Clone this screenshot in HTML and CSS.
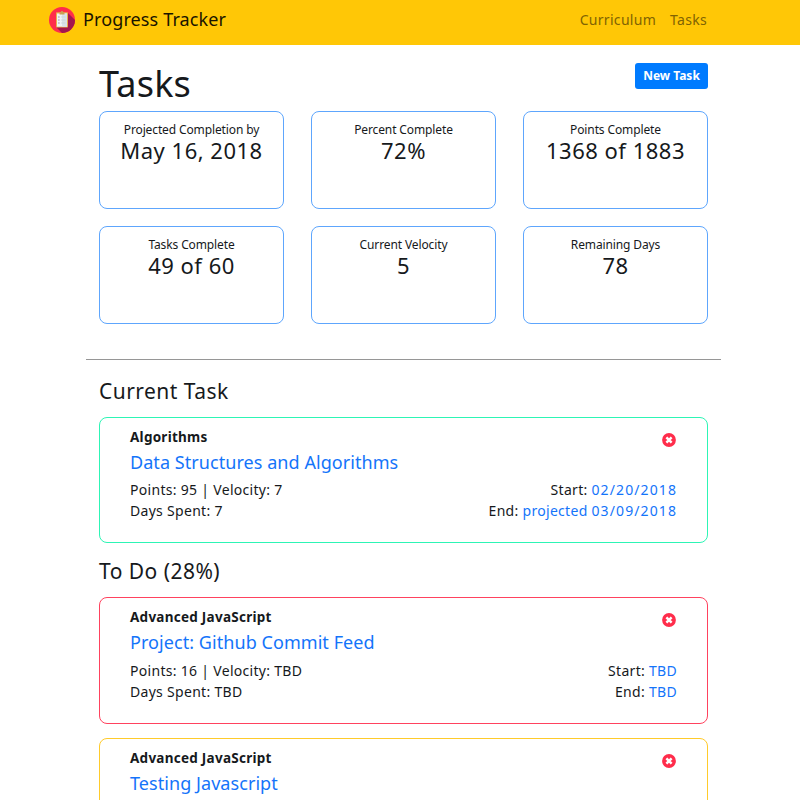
FILE: index.html
```html
<!DOCTYPE html>
<html lang="en">
<head>
<meta charset="utf-8">
<title>Progress Tracker</title>
<link rel="stylesheet" href="styles.css">
</head>
<body>
<svg width="0" height="0" class="sprite" aria-hidden="true">
  <symbol id="remove" viewBox="0 0 14 14">
    <circle cx="7" cy="7" r="6.9" fill="#ff2d4b"/>
    <path d="M4.4 4.4l5.2 5.2M9.6 4.4L4.4 9.6" stroke="#fff" stroke-width="2.5"/>
  </symbol>
</svg>
<header class="navbar">
  <a class="brand">
    <svg class="logo" viewBox="0 0 26 26">
      <clipPath id="disc"><circle cx="13" cy="13" r="13"/></clipPath>
      <g clip-path="url(#disc)">
        <rect width="26" height="26" fill="#ff2d4b"/>
        <path d="M19 6l9 9v13H15L7.5 20.5z" fill="#a3174f"/>
      </g>
      <rect x="7" y="5.3" width="12" height="15.2" rx=".8" fill="#e8b04a"/>
      <rect x="8" y="6.5" width="10" height="13.2" fill="#eef3f6"/>
      <path d="M13 6.5h5v13.2h-5z" fill="#d9e3e8"/>
      <path d="M10.5 5.4h1.2a1.3 1.3 0 0 1 2.6 0h1.2v2h-5z" fill="#c9a052"/>
      <path d="M9 10h1.7M9 13h1.7M9 16h1.7" stroke="#a58fb0" stroke-width="1.2"/>
      <path d="M12 10h4.5M12 13h4.5M12 16h4.5" stroke="#c5d0d8" stroke-width=".7"/>
    </svg>
    <span class="brand-name">Progress Tracker</span>
  </a>
  <nav class="nav"><a>Curriculum</a><a>Tasks</a></nav>
</header>
<main class="container">
  <div class="page-head"><h1>Tasks</h1><button class="btn">New Task</button></div>
  <section class="stats">
    <div class="stat"><p>Projected Completion by</p><h3>May 16, 2018</h3></div>
    <div class="stat"><p>Percent Complete</p><h3>72%</h3></div>
    <div class="stat"><p>Points Complete</p><h3>1368 of 1883</h3></div>
    <div class="stat"><p>Tasks Complete</p><h3>49 of 60</h3></div>
    <div class="stat"><p>Current Velocity</p><h3>5</h3></div>
    <div class="stat"><p>Remaining Days</p><h3>78</h3></div>
  </section>
  <hr>
  <h2>Current Task</h2>
  <article class="task current">
    <div class="row"><strong>Algorithms</strong><svg class="remove"><use href="#remove"/></svg></div>
    <h4>Data Structures and Algorithms</h4>
    <div class="row line"><span>Points: 95 | Velocity: 7</span><span>Start: <a class="date">02/20/2018</a></span></div>
    <div class="row line"><span>Days Spent: 7</span><span>End: <a>projected <span class="date">03/09/2018</span></a></span></div>
  </article>
  <h2>To Do (28%)</h2>
  <article class="task todo">
    <div class="row"><strong>Advanced JavaScript</strong><svg class="remove"><use href="#remove"/></svg></div>
    <h4>Project: Github Commit Feed</h4>
    <div class="row line"><span>Points: 16 | Velocity: TBD</span><span>Start: <a>TBD</a></span></div>
    <div class="row line"><span>Days Spent: TBD</span><span>End: <a>TBD</a></span></div>
  </article>
  <article class="task pending">
    <div class="row"><strong>Advanced JavaScript</strong><svg class="remove"><use href="#remove"/></svg></div>
    <h4>Testing Javascript</h4>
  </article>
</main>
</body>
</html>
```
FILE: styles.css
```css
* { box-sizing: border-box; }
html, body { margin: 0; height: 800px; overflow: hidden; }
body { background: #fff; color: #16191c; font: 14px/21px "Noto Sans", "Open Sans", sans-serif; }
h1, h2, h3, h4, p { margin: 0; font-weight: 400; }
.sprite { display: block; }
.navbar { display: flex; justify-content: space-between; height: 45px; padding: 6px 93px 0 49px; background: #ffc706; }
.brand { display: flex; height: 27px; align-items: center; gap: 8px; }
.logo { width: 26px; height: 26px; }
.brand-name { font-size: 18px; color: #191400; letter-spacing: .12px; }
.nav { display: flex; gap: 14px; line-height: 27px; color: #806303; letter-spacing: .3px; }
.container { width: 635px; margin-left: 86px; }
.page-head { display: flex; justify-content: space-between; align-items: flex-start; height: 66px; padding: 18px 13px 0; }
h1 { font-size: 36px; line-height: 42px; letter-spacing: .2px; }
.btn { width: 73px; height: 26px; padding: 0; border: 0; border-radius: 3px; background: #007bff; color: #fff; font: 700 12px/26px "Noto Sans", sans-serif; }
.stats { display: grid; grid-template-columns: repeat(3, 185px); gap: 17px 27px; padding: 0 13px; }
.stat { height: 98px; border: 1px solid #5ea6fd; border-radius: 8px; text-align: center; padding-top: 10px; }
.stat p { font-size: 12px; line-height: 16px; letter-spacing: -.12px; }
.stat h3 { font-size: 22px; line-height: 24px; letter-spacing: .5px; }
hr { height: 1px; margin: 35px 0 18px; border: 0; background: #969696; }
h2 { margin: 0 13px 13px; font-size: 21px; line-height: 26px; letter-spacing: .47px; }
.task { width: 609px; height: 126px; margin: 0 0 14px 13px; padding: 9px 30px 0 30px; border: 1px solid #2df5b5; border-radius: 8px; }
.row { display: flex; justify-content: space-between; white-space: nowrap; }
.row strong { font-size: 13.5px; letter-spacing: .26px; }
.remove { width: 14px; height: 14px; margin: 6px 1px 0 0; }
.task h4 { font-size: 18px; line-height: 28px; margin-bottom: 4px; color: #1474fa; letter-spacing: .06px; }
.line { letter-spacing: .3px; }
.line a { color: #1474fa; }
.line .date { color: #1474fa; letter-spacing: 1.1px; }
.task.current { margin-bottom: 15px; }
.task.current h4 { margin-bottom: 3px; }
.task.todo { border-color: #ff425e; height: 127px; }
.task.pending { border-color: #ffcb2b; }
```
